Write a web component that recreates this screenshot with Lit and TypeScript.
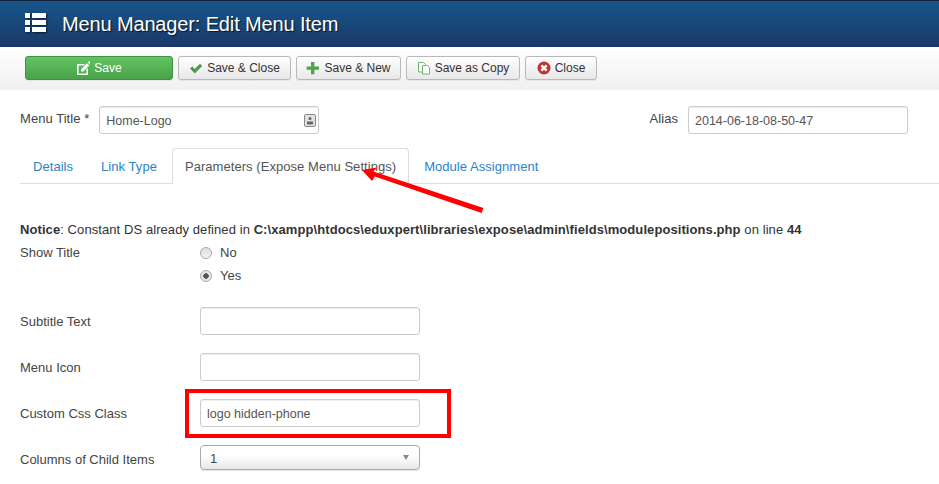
import { LitElement, css, html, svg } from 'lit'
import { customElement } from 'lit/decorators.js'

const icons = {
  edit: svg`<path fill="#fff" d="M1 3h8L7.600 4.600H2.600v7.800h7.800V8.500L12 7v7H1z"/><path fill="#fff" d="M5 8.200 11 2.200l2.300 2.300-6 6H5zM11.800 1.400l.8-.8a.7.7 0 0 1 1 0l1.200 1.200a.7.7 0 0 1 0 1l-.8.9z"/>`,
  check: svg`<path fill="#4d9a4f" d="M1 7.600 3.200 5.400l2.600 2.600L11 2.800l2.200 2.200-7.400 7.400z"/>`,
  plus: svg`<path fill="#4fa54f" d="M5 1h3.400v4.400H13v3.300H8.400v4.500H5V8.700H.6V5.400H5z"/>`,
  copy: svg`<path fill="#fff" stroke="#6fb56f" d="M1.500 1.500h5l2 2v7.500h-7z"/><path fill="#fff" stroke="#6fb56f" d="M5.500 4.500h5l2 2v6.500h-7z"/>`,
  close: svg`<circle cx="7" cy="7" r="6.500" fill="#bd362f"/><path stroke="#fff" stroke-width="2.400" d="M4.300 4.300l5.400 5.400M9.700 4.300l-5.400 5.400"/>`,
}

@customElement('app-root')
export class AppRoot extends LitElement {
  private icon(name: keyof typeof icons) {
    return html`<svg class="ico" width="14" height="14" viewBox="0 0 14 14">${icons[name]}</svg>`
  }

  public render() {
    return html`
      <header class="header">
        <svg class="logo" width="21" height="19" viewBox="0 0 21 19" fill="#fff">
          <path d="M0 0h5v5H0zM7 0h14v5H7zM0 7h5v5H0zM7 7h14v5H7zM0 14h5v5H0zM7 14h14v5H7z"/>
        </svg>
        <h1 class="title">Menu Manager: Edit Menu Item</h1>
      </header>

      <div class="toolbar">
        <button class="btn save">${this.icon('edit')}Save</button>
        <button class="btn w-close">${this.icon('check')}Save &amp; Close</button>
        <button class="btn w-new">${this.icon('plus')}Save &amp; New</button>
        <button class="btn w-copy">${this.icon('copy')}Save as Copy</button>
        <button class="btn w-x">${this.icon('close')}Close</button>
      </div>

      <main class="page">
        <div class="head-row">
          <div class="pair">
            <label class="head-label">Menu Title *</label>
            <div class="input title-input">Home-Logo
              <svg class="key" width="12" height="13" viewBox="0 0 12 13">
                <rect x=".5" y=".5" width="11" height="12" rx="1.500" fill="#e2e2e2" stroke="#888"/>
                <circle cx="6" cy="4.500" r="1.500" fill="#666"/>
                <path fill="#666" d="M3 7.500h6v3H3z"/>
              </svg>
            </div>
          </div>
          <div class="pair alias">
            <label class="head-label">Alias</label>
            <div class="input title-input">2014-06-18-08-50-47</div>
          </div>
        </div>

        <nav class="tabs">
          <a class="tab first">Details</a>
          <a class="tab">Link Type</a>
          <a class="tab active">Parameters (Expose Menu Settings)</a>
          <a class="tab">Module Assignment</a>
        </nav>

        <p class="notice">
          <b>Notice</b>: Constant DS already defined in
          <b>C:\\xampp\\htdocs\\eduxpert\\libraries\\expose\\admin\\fields\\modulepositions.php</b>
          on line <b>44</b>
        </p>

        <div class="form">
          <div class="row radios-row">
            <label>Show Title</label>
            <div class="radios">
              <div class="radio"><span class="dot"></span>No</div>
              <div class="radio"><span class="dot on"></span>Yes</div>
            </div>
          </div>
          <div class="row"><label>Subtitle Text</label><div class="input field"></div></div>
          <div class="row"><label>Menu Icon</label><div class="input field"></div></div>
          <div class="row"><label>Custom Css Class</label><div class="input field">logo hidden-phone</div></div>
          <div class="row">
            <label class="select-label">Columns of Child Items</label>
            <div class="select">1<span class="caret"></span></div>
          </div>
        </div>
      </main>

      <div class="red-box"></div>
      <svg class="arrow" width="140" height="60" viewBox="0 0 140 60">
        <path fill="#f00" d="M10 8 25 5.500 21.400 9.600 131.400 46 129.600 51 22.800 14.600 20 19z"/>
      </svg>
    `
  }

  public static styles = css`
    :host {
      display: block;
      position: relative;
      width: 939px;
      height: 484px;
      overflow: hidden;
      background: #fff;
      font: 13px/18px "Liberation Sans", Arial, sans-serif;
      letter-spacing: .05px;
      color: #555;
    }
    .header {
      height: 47px;
      box-sizing: border-box;
      display: flex;
      align-items: center;
      padding: 0 0 1px 25px;
      border-top: 1px solid #14243f;
      background: linear-gradient(#17568c, #1a3867);
    }
    .logo {
      margin-bottom: 2px;
      filter: drop-shadow(1px 1px 1px rgba(0, 0, 0, .6));
    }
    .title {
      margin: 0 0 0 16px;
      font-size: 20px;
      font-weight: normal;
      letter-spacing: -.14px;
      line-height: 24px;
      color: #fff;
      text-shadow: 1px 1px 1px rgba(0, 0, 0, .7);
    }
    .toolbar {
      height: 43px;
      box-sizing: border-box;
      display: flex;
      gap: 5px;
      padding: 9px 0 0 25px;
      background: linear-gradient(#fff, #f0f0f0);
    }
    .btn {
      height: 24px;
      box-sizing: border-box;
      display: flex;
      align-items: center;
      justify-content: center;
      gap: 4px;
      padding: 0;
      border: 1px solid #b8b8b8;
      border-radius: 3px;
      background: linear-gradient(#fff, #e8e8e8);
      box-shadow: 0 1px 0 rgba(0, 0, 0, .06);
      font: inherit;
      font-size: 12px;
      letter-spacing: 0;
      color: #333;
    }
    .save {
      width: 148px;
      color: #fff;
      border-color: #3f9243;
      background: linear-gradient(#62c462, #48a24a);
    }
    .w-close { width: 113px; }
    .w-new { width: 105px; }
    .w-copy { width: 114px; }
    .w-x { width: 72px; }
    .page {
      padding: 16px 0 0 20px;
    }
    .head-row {
      display: flex;
      justify-content: space-between;
      padding-right: 31px;
    }
    .pair {
      display: flex;
      gap: 10px;
    }
    .head-label { padding-top: 4px; color: #444; }
    .input {
      box-sizing: border-box;
      position: relative;
      height: 28px;
      border: 1px solid #ccc;
      border-radius: 3px;
      padding: 5px 6px;
      background: #fff;
      box-shadow: inset 0 1px 1px rgba(0, 0, 0, .075);
      font-size: 12.500px;
      letter-spacing: 0;
      color: #555;
    }
    .title-input { width: 220px; }
    .key {
      position: absolute;
      right: 2px;
      top: 7px;
    }
    .tabs {
      display: flex;
      height: 36px;
      box-sizing: border-box;
      margin-top: 14px;
      border-bottom: 1px solid #ddd;
    }
    .tab {
      box-sizing: border-box;
      height: 36px;
      padding: 9px 13px 0;
      color: #2a85c8;
      border: 1px solid transparent;
      border-bottom: 0;
      border-radius: 4px 4px 0 0;
    }
    .tab.first { padding-left: 12px; }
    .tab.active {
      color: #555;
      background: #fff;
      border-color: #ddd;
      padding: 9px 12px 0;
      margin: 0 1px;
    }
    .notice {
      margin: 37px 0 0;
      color: #333;
      letter-spacing: .08px;
    }
    .form {
      display: flex;
      flex-direction: column;
      gap: 18px;
      margin-top: 5px;
    }
    .row {
      display: grid;
      grid-template-columns: 180px 220px;
      align-items: center;
      color: #444;
      letter-spacing: 0;
    }
    .row label { padding-top: 2px; }
    .row .select-label { padding-top: 4px; }
    .radios-row {
      align-items: start;
      margin-bottom: 4px;
    }
    .radios-row label { padding-top: 0; }
    .radios {
      display: flex;
      flex-direction: column;
      gap: 5px;
    }
    .radio {
      display: flex;
      align-items: center;
      gap: 8px;
      height: 18px;
    }
    .dot {
      box-sizing: border-box;
      width: 12px;
      height: 12px;
      border: 1px solid #aaa;
      border-radius: 50%;
      background: linear-gradient(#ddd, #f4f4f4);
    }
    .dot.on {
      background: radial-gradient(circle, #555 0 2.500px, #e8e8e8 3px);
    }
    .field { width: 220px; }
    .select {
      box-sizing: border-box;
      position: relative;
      width: 220px;
      height: 25px;
      padding: 4px 9px;
      border: 1px solid #aaa;
      border-radius: 4px;
      background: linear-gradient(#fff 40%, #e8e8e8);
      box-shadow: 0 1px 1px rgba(0, 0, 0, .1);
    }
    .caret {
      position: absolute;
      right: 10px;
      top: 9px;
      border: 3.500px solid transparent;
      border-top: 5px solid #888;
      border-bottom: 0;
    }
    .red-box {
      position: absolute;
      left: 185px;
      top: 389px;
      width: 266px;
      height: 49px;
      box-sizing: border-box;
      border: 4px solid #f00;
    }
    .arrow {
      position: absolute;
      left: 352px;
      top: 162px;
    }
  `
}
